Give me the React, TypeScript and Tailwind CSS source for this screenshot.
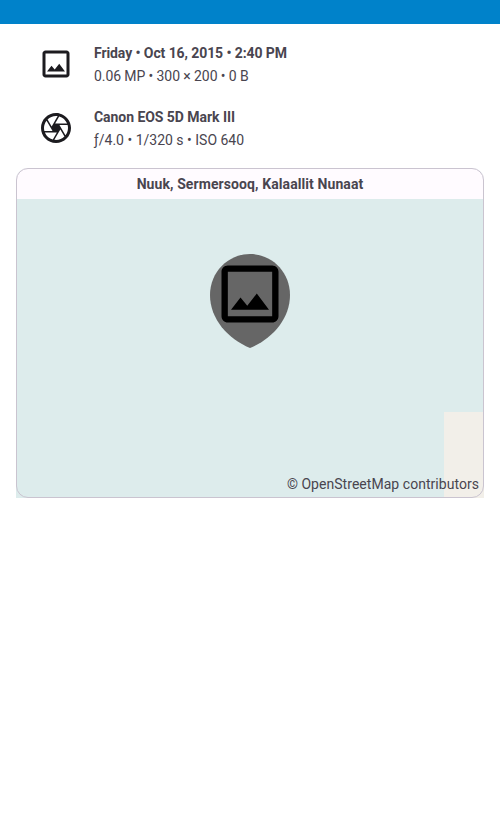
import React from "react";

type DetailProps = { icon: React.ReactNode; title: React.ReactNode; caption: React.ReactNode };

const IMAGE_PATH =
  "M19 5v14H5V5h14m0-2H5c-1.100 0-2 .9-2 2v14c0 1.100.9 2 2 2h14c1.100 0 2-.9 2-2V5c0-1.100-.9-2-2-2zm-4.860 8.860l-3 3.870L9 13.140 6 17h12l-3.860-5.140z";

const APERTURE_PATH =
  "M14.250 2.260l-.08-.04-.01.02C13.460 2.090 12.740 2 12 2 6.480 2 2 6.480 2 12s4.480 10 10 10 10-4.480 10-10c0-4.750-3.310-8.720-7.750-9.740zM19.410 9h-7.990l2.710-4.700c2.400.66 4.350 2.420 5.280 4.700zM13.100 4.080L10.270 9l-1.150 2L6.400 6.300C7.840 4.880 9.820 4 12 4c.37 0 .74.03 1.100.08zM5.700 7.090L8.540 12l1.150 2H4.260C4.100 13.360 4 12.690 4 12c0-1.850.64-3.550 1.700-4.910zM4.590 15h7.980l-2.710 4.700c-2.400-.67-4.340-2.420-5.270-4.700zm6.310 4.910L14.890 13l2.720 4.700C16.160 19.120 14.180 20 12 20c-.38 0-.74-.04-1.100-.09zm7.400-3l-4-6.910h5.430c.17.640.27 1.310.27 2 0 1.850-.64 3.550-1.700 4.910z";

function Icon({ path, className }: { path: string; className: string }) {
  return (
    <svg viewBox="0 0 24 24" className={className} fill="currentColor" aria-hidden="true">
      <path d={path} />
    </svg>
  );
}

function Detail({ icon, title, caption }: DetailProps) {
  return (
    <div className="flex h-16 items-center gap-5 pl-[38px]">
      {icon}
      <div className="pt-0.5 text-sm leading-[23px] text-[#49454f]">
        <p className="font-bold">{title}</p>
        <p>{caption}</p>
      </div>
    </div>
  );
}

export default function App() {
  return (
    <div className="h-[833px] w-[500px] overflow-hidden bg-white font-['Roboto',sans-serif]">
      <header className="h-6 bg-[#0082ca]" />
      <main className="pt-2">
        <Detail
          icon={<Icon path={IMAGE_PATH} className="size-9 text-[#1c1b1f]" />}
          title={<span className="tracking-[-0.09px]">Friday • Oct 16, 2015 • 2:40 PM</span>}
          caption={<span className="tracking-[-0.09px]">0.06 MP • 300 × 200 • 0 B</span>}
        />
        <Detail
          icon={<Icon path={APERTURE_PATH} className="size-9 text-[#1c1b1f]" />}
          title={<span className="tracking-[-0.05px]">Canon EOS 5D Mark III</span>}
          caption="ƒ/4.0 • 1/320 s • ISO 640"
        />
        <section className="relative mx-4 mt-2 flex h-[330px] flex-col rounded-t-xl bg-[#ddecec]">
          <h2 className="h-[31px] rounded-t-xl bg-[#fffbff] text-center text-sm leading-8 font-bold tracking-[0.09px] text-[#49454f]">
            Nuuk, Sermersooq, Kalaallit Nunaat
          </h2>
          <div className="flex flex-1 items-end justify-end">
            <div className="h-[86px] w-10 bg-[#f2efe9]" />
          </div>
          <svg
            viewBox="0 0 80 94"
            className="absolute top-[86px] left-[194px] h-[94px] w-20"
            aria-hidden="true"
          >
            <path d="M40 0C62 0 80 18 80 41C80 65 62 85 40 94C18 85 0 65 0 41C0 18 18 0 40 0Z" fill="#666" />
            <path d={IMAGE_PATH} transform="translate(2 2) scale(3.167)" />
          </svg>
          <p className="absolute right-[5px] bottom-1 text-sm leading-5 tracking-[0.04px] text-[#49454f]">
            © OpenStreetMap contributors
          </p>
          <div className="absolute inset-0 rounded-xl border border-[#cac4d0]" />
        </section>
      </main>
    </div>
  );
}
